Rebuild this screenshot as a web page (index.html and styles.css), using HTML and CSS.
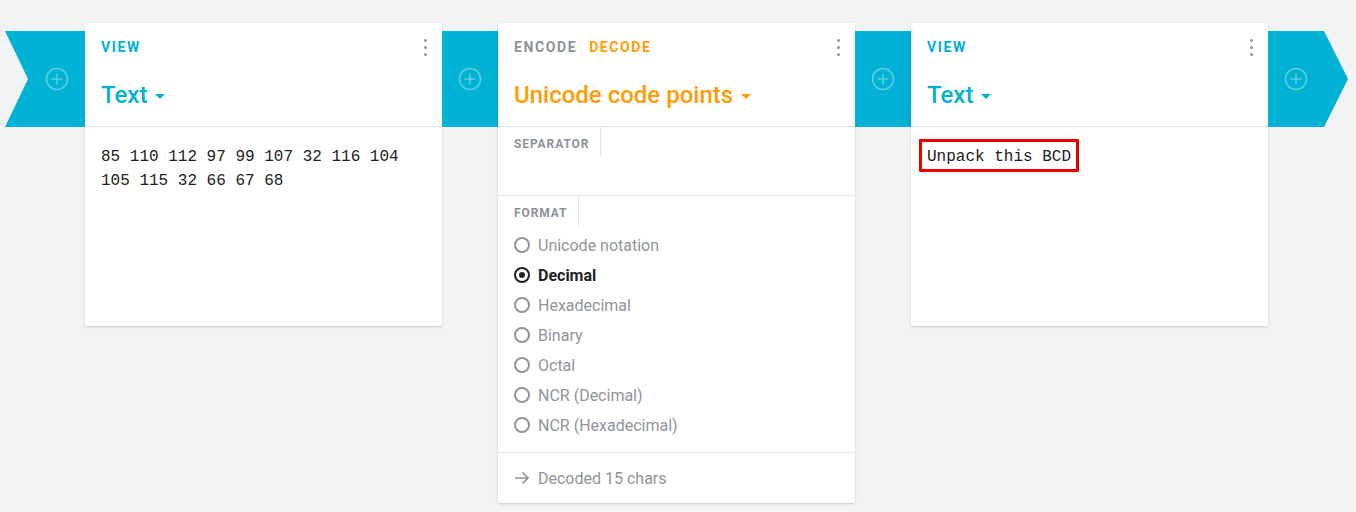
FILE: index.html
```html
<!DOCTYPE html>
<html>
<head>
<meta charset="utf-8">
<link rel="stylesheet" href="styles.css">
</head>
<body>
<div class="chain">
  <div class="link link-start"><span class="plus"><svg viewBox="0 0 24 24" width="24" height="24"><circle cx="12" cy="12" r="10.5" fill="none" stroke="currentColor" stroke-width="1.6"/><path d="M12 6.5v11M6.5 12h11" stroke="currentColor" stroke-width="1.6"/></svg></span></div>

  <section class="card">
    <header class="card-head">
      <div class="head-row">
        <div class="tabs"><span class="tab tab-view">VIEW</span></div>
        <span class="dots"><i></i><i></i><i></i></span>
      </div>
      <div class="title title-view">Text <span class="caret"></span></div>
    </header>
    <div class="card-body mono">85 110 112 97 99 107 32 116 104 105 115 32 66 67 68</div>
  </section>

  <div class="link"><span class="plus"><svg viewBox="0 0 24 24" width="24" height="24"><circle cx="12" cy="12" r="10.5" fill="none" stroke="currentColor" stroke-width="1.6"/><path d="M12 6.5v11M6.5 12h11" stroke="currentColor" stroke-width="1.6"/></svg></span></div>

  <section class="card">
    <header class="card-head">
      <div class="head-row">
        <div class="tabs"><span class="tab tab-off">ENCODE</span><span class="tab tab-on">DECODE</span></div>
        <span class="dots"><i></i><i></i><i></i></span>
      </div>
      <div class="title title-op">Unicode code points <span class="caret"></span></div>
    </header>
    <div class="field field-sep">
      <span class="field-label">SEPARATOR</span>
    </div>
    <div class="field field-format">
      <span class="field-label">FORMAT</span>
      <ul class="radios">
        <li class="radio"><span class="dot"></span>Unicode notation</li>
        <li class="radio radio-on"><span class="dot"></span>Decimal</li>
        <li class="radio"><span class="dot"></span>Hexadecimal</li>
        <li class="radio"><span class="dot"></span>Binary</li>
        <li class="radio"><span class="dot"></span>Octal</li>
        <li class="radio"><span class="dot"></span>NCR (Decimal)</li>
        <li class="radio"><span class="dot"></span>NCR (Hexadecimal)</li>
      </ul>
    </div>
    <footer class="status"><svg class="arrow" viewBox="0 0 16 16" width="16" height="16"><path d="M1 8h13M8.5 2.5 14 8l-5.5 5.5" fill="none" stroke="currentColor" stroke-width="1.7"/></svg>Decoded 15 chars</footer>
  </section>

  <div class="link"><span class="plus"><svg viewBox="0 0 24 24" width="24" height="24"><circle cx="12" cy="12" r="10.5" fill="none" stroke="currentColor" stroke-width="1.6"/><path d="M12 6.5v11M6.5 12h11" stroke="currentColor" stroke-width="1.6"/></svg></span></div>

  <section class="card">
    <header class="card-head">
      <div class="head-row">
        <div class="tabs"><span class="tab tab-view">VIEW</span></div>
        <span class="dots"><i></i><i></i><i></i></span>
      </div>
      <div class="title title-view">Text <span class="caret"></span></div>
    </header>
    <div class="card-body mono"><span class="marked">Unpack this BCD</span></div>
  </section>

  <div class="link link-end"><span class="plus"><svg viewBox="0 0 24 24" width="24" height="24"><circle cx="12" cy="12" r="10.5" fill="none" stroke="currentColor" stroke-width="1.6"/><path d="M12 6.5v11M6.5 12h11" stroke="currentColor" stroke-width="1.6"/></svg></span></div>
</div>
</body>
</html>
```

FILE: styles.css
```css
* { box-sizing: border-box; }
html, body { margin: 0; padding: 0; }
body {
  background: #f2f3f5;
  font-family: Roboto, "Noto Sans", sans-serif;
  width: 1356px;
  height: 512px;
  overflow: hidden;
}
.chain {
  display: flex;
  align-items: flex-start;
  padding: 23px 0 0 5px;
}
.link {
  width: 56px;
  height: 96px;
  margin-top: 8px;
  background: #00b2d3;
  display: flex;
  align-items: center;
  justify-content: center;
  flex: none;
}
.link-start {
  width: 80px;
  padding-left: 23px;
  clip-path: polygon(0 0, 100% 0, 100% 100%, 0 100%, 23px 50%);
}
.link-end {
  width: 80px;
  padding-right: 24px;
  clip-path: polygon(0 0, 56px 0, 100% 50%, 56px 100%, 0 100%);
}
.plus {
  color: rgba(255,255,255,0.35);
  display: flex;
}
.card {
  width: 357px;
  flex: none;
  background: #fff;
  border-radius: 2px;
  box-shadow: 0 1px 3px rgba(0,0,0,0.12), 0 1px 2px rgba(0,0,0,0.06);
  min-height: 303px;
}
.card-head {
  padding: 16px 16px 15px 16px;
  border-bottom: 1px solid #e2e5e8;
  height: 104px;
}
.head-row {
  display: flex;
  align-items: center;
  justify-content: space-between;
  height: 16px;
}
.tabs { display: flex; gap: 12px; }
.tab {
  font-size: 14px;
  font-weight: 700;
  letter-spacing: 1.6px;
  line-height: 16px;
}
.tab-view { color: #00b2d3; }
.tab-off { color: #8b939a; }
.tab-on { color: #ff9b05; }
.dots {
  display: flex;
  flex-direction: column;
  gap: 4px;
  margin-right: -1px;
}
.dots i {
  display: block;
  width: 3px;
  height: 3px;
  border-radius: 50%;
  background: #8f969c;
}
.title {
  margin-top: 24px;
  font-size: 24px;
  font-weight: 500;
  line-height: 32px;
  display: flex;
  align-items: center;
}
.title-view { color: #00b2d3; }
.title-op { color: #ff9b05; }
.caret {
  display: inline-block;
  width: 0;
  height: 0;
  border-left: 5.5px solid transparent;
  border-right: 5.5px solid transparent;
  border-top: 5.5px solid currentColor;
  margin-left: 8px;
  margin-top: 2px;
}
.card-body {
  padding: 18px 16px;
}
.mono {
  font-family: "Liberation Mono", monospace;
  font-size: 16px;
  line-height: 24px;
  color: #222;
}
.marked {
  display: inline-block;
  border: 3px solid #ee0000;
  border-radius: 1px;
  padding: 3px 5px 0 5px;
  margin: -6px 0 0 -8px;
  line-height: 24px;
}
.field {
  border-bottom: 1px solid #e2e5e8;
}
.field-sep { height: 69px; }
.field-label {
  display: inline-block;
  padding: 9px 11px 5px 16px;
  border-right: 1px solid #e2e5e8;
  font-size: 12px;
  font-weight: 700;
  letter-spacing: 0.9px;
  line-height: 16px;
  color: #8b939a;
}
.radios {
  list-style: none;
  margin: 0;
  padding: 4px 16px 12px 16px;
}
.radio {
  display: flex;
  align-items: center;
  gap: 8px;
  height: 30px;
  font-size: 16px;
  color: #8f959a;
}
.radio .dot {
  width: 16px;
  height: 16px;
  border: 2px solid #8f959a;
  border-radius: 50%;
  flex: none;
  display: flex;
  align-items: center;
  justify-content: center;
}
.radio-on {
  color: #1f2225;
  font-weight: 700;
}
.radio-on .dot { border-color: #1f2225; }
.radio-on .dot::after {
  content: "";
  width: 6px;
  height: 6px;
  border-radius: 50%;
  background: #1f2225;
}
.status {
  display: flex;
  align-items: center;
  gap: 8px;
  height: 50px;
  padding: 0 16px;
  font-size: 16px;
  color: #8f959a;
}
.arrow { flex: none; }
```
